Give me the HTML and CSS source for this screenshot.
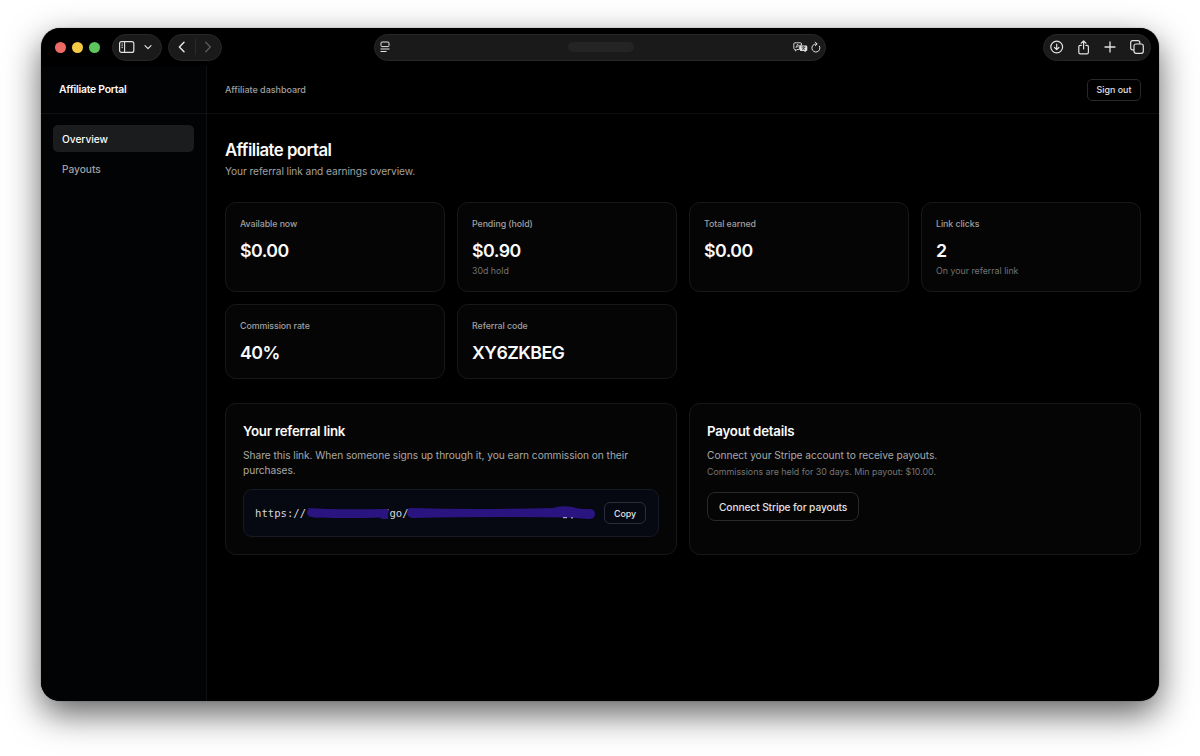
FILE: index.html
```html
<!DOCTYPE html>
<html lang="en">
<head>
  <meta charset="utf-8">
  <title>Affiliate portal</title>
  <link rel="stylesheet" href="styles.css">
</head>
<body>
  <div class="window">
    <div class="toolbar">
      <div class="lights">
        <span class="light red"></span>
        <span class="light yellow"></span>
        <span class="light green"></span>
      </div>
      <div class="pill sidebar-pill">
        <svg width="16" height="12" viewBox="0 0 16 12" fill="none" stroke="currentColor"><rect x=".6" y=".6" width="14.2" height="10.8" rx="2" stroke-width="1.2"/><path d="M5.6 .8v10.4" stroke-width="1.1"/><path d="M2.4 3h1.6M2.4 4.8h1.6M2.4 6.6h1.6" stroke-width=".8"/></svg>
        <svg width="8" height="6" viewBox="0 0 8 6" fill="none" stroke="currentColor" stroke-width="1.2" stroke-linecap="round" stroke-linejoin="round"><path d="M1 1.6l3 3 3-3"/></svg>
      </div>
      <div class="pill history-pill">
        <svg width="8" height="12" viewBox="0 0 8 12" fill="none" stroke="currentColor" stroke-width="1.5" stroke-linecap="round" stroke-linejoin="round"><path d="M6 1.2L1.4 6L6 10.8"/></svg>
        <span class="divider"></span>
        <svg class="dim" width="8" height="12" viewBox="0 0 8 12" fill="none" stroke="currentColor" stroke-width="1.3" stroke-linecap="round" stroke-linejoin="round"><path d="M1.7 1.2L6.3 6l-4.6 4.8"/></svg>
      </div>
      <div class="address">
        <svg width="10" height="12" viewBox="0 0 10 12" fill="none" stroke="currentColor"><rect x="1" y="1" width="8" height="4.6" rx="1"/><path d="M.5 8h9M.5 10.5h6"/></svg>
        <span class="address-text"></span>
        <span class="address-icons">
          <svg width="15" height="11" viewBox="0 0 15 11"><path d="M2 .8h5.4q1.2 0 1.2 1.2v1.2H7.4q-1 0-1 1v3.3H4L2.4 9V7.5H2Q.8 7.5 .8 6.3V2Q.8 .8 2 .8z" fill="none" stroke="currentColor" stroke-width=".9"/><path d="M2.8 5.9l1.8-3.7 1 2M3.4 4.8h2" fill="none" stroke="currentColor" stroke-width=".8"/><path d="M8 3.4h5q1.3 0 1.3 1.3v3q0 1.3-1.3 1.3h-.4v1.6L11 9H8Q6.8 9 6.8 7.7v-3Q6.8 3.4 8 3.4z" fill="currentColor"/><path d="M8.5 5.1h4M10.5 4.2v.9M9.1 7.9q2-1 2.5-2.7M9.4 5.7q.8 1.5 2.5 2.2" fill="none" stroke="#1b1b1b" stroke-width=".7"/></svg>
          <svg width="10" height="12" viewBox="0 0 10 12" fill="none" stroke="currentColor" stroke-linecap="round" stroke-linejoin="round"><path d="M8.5 5.2A4 4 0 1 1 5 3h.8M4.3 1.1l1.8 1.9-1.8 1.8"/></svg>
        </span>
      </div>
      <div class="pill actions-pill">
        <svg width="14" height="14" viewBox="0 0 14 14" fill="none" stroke="currentColor" stroke-width="1.2" stroke-linecap="round" stroke-linejoin="round"><circle cx="6.7" cy="7" r="5.9"/><path d="M6.7 4v5.5M4.5 7.5l2.2 2.2 2.2-2.2"/></svg>
        <svg width="13" height="15" viewBox="1 0 13 15" fill="none" stroke="currentColor" stroke-width="1.2" stroke-linecap="round" stroke-linejoin="round"><path d="M4.3 5.4H3.200Q1.800 5.400 1.800 6.800v5.400q0 1.600 1.600 1.600h6.400q1.600 0 1.600-1.600V6.800q0-1.400-1.400-1.400H8.900M6.600 9V1M4.200 3.200L6.600 .9 9 3.200"/></svg>
        <svg width="12" height="12" viewBox="0 0 12 12" fill="none" stroke="currentColor" stroke-width="1.3" stroke-linecap="round"><path d="M6 1v10M1 6h10"/></svg>
        <svg width="14" height="14" viewBox="0 0 14 14" fill="none" stroke="currentColor" stroke-width="1.2" stroke-linejoin="round"><rect x="4" y="4" width="9.3" height="9.3" rx="2"/><path d="M4 9.8H2.6Q.7 9.8 .7 7.9V2.6Q.7 .7 2.6 .7h5.3q1.9 0 1.9 1.9V4"/></svg>
      </div>
    </div>

    <div class="app">
      <aside class="sidebar">
        <div class="brand">Affiliate Portal</div>
        <nav class="nav">
          <a class="nav-item active">Overview</a>
          <a class="nav-item">Payouts</a>
        </nav>
      </aside>

      <div class="main">
        <header class="header">
          <span>Affiliate dashboard</span>
          <button class="button sign-out">Sign out</button>
        </header>

        <main class="content">
          <h1>Affiliate portal</h1>
          <p class="subtitle">Your referral link and earnings overview.</p>

          <div class="stats">
            <div class="card stat">
              <div class="label">Available now</div>
              <div class="value">$0.00</div>
            </div>
            <div class="card stat">
              <div class="label">Pending (hold)</div>
              <div class="value">$0.90</div>
              <div class="hint">30d hold</div>
            </div>
            <div class="card stat">
              <div class="label">Total earned</div>
              <div class="value">$0.00</div>
            </div>
            <div class="card stat">
              <div class="label">Link clicks</div>
              <div class="value">2</div>
              <div class="hint">On your referral link</div>
            </div>
            <div class="card stat">
              <div class="label">Commission rate</div>
              <div class="value">40%</div>
            </div>
            <div class="card stat">
              <div class="label">Referral code</div>
              <div class="value">XY6ZKBEG</div>
            </div>
          </div>

          <div class="panels">
            <section class="card panel">
              <h2>Your referral link</h2>
              <p>Share this link. When someone signs up through it, you earn commission on their purchases.</p>
              <div class="link-box">
                <div class="link">
                  <code>https://</code><code class="path">/go/</code>
                  <svg class="marker" width="342" height="20" viewBox="0 0 342 20"><path d="M52 5q28 2 80 1q3 1 1 5v5h-6l-2-1.500q-30 1-60 0q-12 1-13-4.500q0-3 2-4z"/><path d="M155 5q69 2 143 0q8-3 20-1q4 2 16 2q6 0 6 5q0 5-6 5l-14-1q-60-2-163 0q-5-1-5-6q0-3 3-4z"/><path class="trace" d="M308 14.700h4M316 14.900h2"/></svg>
                </div>
                <button class="button copy">Copy</button>
              </div>
            </section>
            <section class="card panel">
              <h2>Payout details</h2>
              <p>Connect your Stripe account to receive payouts.</p>
              <p class="note">Commissions are held for 30 days. Min payout: $10.00.</p>
              <button class="button connect">Connect Stripe for payouts</button>
            </section>
          </div>
        </main>
      </div>
    </div>
  </div>
</body>
</html>
```
FILE: styles.css
```css
* {
  box-sizing: border-box;
}

body {
  margin: 0;
  height: 756px;
  padding: 28px 41px 0;
  font-family: Inter, sans-serif;
  font-size: 10.2px;
  color: #fafafa;
  background: #ffffff;
  overflow: hidden;
}

h1,
h2,
p {
  margin: 0;
}

svg {
  display: block;
  flex-shrink: 0;
}

.window {
  display: flex;
  flex-direction: column;
  width: 1118px;
  height: 673px;
  border-radius: 19px;
  background: #000000;
  box-shadow: 0 0 1px rgba(0, 0, 0, 0.7), 0 13px 34px rgba(0, 0, 0, 0.62);
  overflow: hidden;
}

.toolbar {
  display: flex;
  align-items: center;
  height: 38px;
  padding: 0 8px 0 14px;
  color: #e2e2e2;
}

.lights {
  display: flex;
  gap: 6px;
  margin-right: 12px;
}

.light {
  width: 11px;
  height: 11px;
  border-radius: 50%;
}

.red {
  background: #ee6a66;
}

.yellow {
  background: #f5c944;
}

.green {
  background: #5fc65d;
}

.pill,
.address {
  display: flex;
  align-items: center;
  height: 27px;
  border: 1px solid #272727;
  border-radius: 14px;
  background: #1a1a1a;
}

.sidebar-pill {
  width: 50px;
  padding: 0 9px 0 6px;
  justify-content: space-between;
}

.history-pill {
  width: 54px;
  margin-left: 6px;
  padding: 0 9px;
  justify-content: space-between;
}

.divider {
  width: 1px;
  height: 16px;
  background: #2a2a2a;
}

.dim {
  color: #5c5c5c;
}

.address {
  width: 452px;
  margin-left: 152px;
  padding: 0 4px 0 5px;
}

.address-text {
  width: 66px;
  height: 10px;
  margin-left: 178px;
  border-radius: 5px;
  background: #242424;
}

.address-icons {
  display: flex;
  align-items: center;
  gap: 3px;
  margin-left: auto;
}

.actions-pill {
  width: 108px;
  margin-left: auto;
  padding: 0 6px;
  justify-content: space-between;
}

.app {
  display: flex;
  flex: 1;
}

.sidebar {
  width: 166px;
  border-right: 1px solid #0f1113;
  background: #020305;
}

.brand {
  height: 48px;
  padding-left: 18px;
  border-bottom: 1px solid #0f1113;
  font-size: 10.4px;
  font-weight: 600;
  line-height: 48px;
  letter-spacing: -0.24px;
}

.nav {
  display: flex;
  flex-direction: column;
  gap: 3px;
  padding: 11px 12px;
}

.nav-item {
  height: 27px;
  padding-left: 9px;
  border-radius: 5px;
  font-weight: 500;
  line-height: 28px;
  letter-spacing: -0.03px;
  color: #a0a0a2;
}

.nav-item.active {
  color: #fafafa;
  background: #1b1c1e;
}

.main {
  flex: 1;
}

.header {
  display: flex;
  align-items: center;
  justify-content: space-between;
  height: 48px;
  padding: 0 18px;
  border-bottom: 1px solid #0e0e0e;
  font-size: 9px;
  font-weight: 500;
  letter-spacing: -0.03px;
  color: #a0a0a0;
}

.button {
  height: 22px;
  padding: 0 8px;
  border: 1px solid #292929;
  border-radius: 5px;
  font-family: inherit;
  font-size: 8.9px;
  font-weight: 500;
  color: #e0e0e0;
  background: transparent;
}

.sign-out {
  width: 54px;
}

.content {
  padding: 25px 18px;
}

h1 {
  font-size: 16.8px;
  font-weight: 600;
  line-height: 22px;
  letter-spacing: -0.54px;
}

.subtitle {
  margin-top: 3px;
  line-height: 15px;
  letter-spacing: -0.09px;
  color: #a0a0a0;
}

.stats {
  display: grid;
  grid-template-columns: repeat(4, 1fr);
  gap: 12px;
  margin-top: 23px;
}

.card {
  border: 1px solid #181818;
  border-radius: 11px;
  background: #050505;
}

.stat {
  padding: 14px;
}

.stat:nth-child(n + 5) {
  height: 75px;
}

.stat:nth-child(-n + 4) {
  height: 90px;
}

.label {
  font-size: 8.8px;
  font-weight: 500;
  line-height: 13px;
  letter-spacing: -0.06px;
  color: #a0a0a0;
}

.value {
  margin-top: 8px;
  font-size: 17.8px;
  font-weight: 600;
  line-height: 25px;
  letter-spacing: -0.55px;
}

.hint {
  margin-top: 2px;
  font-size: 8.8px;
  line-height: 12px;
  color: #737373;
}

.panels {
  display: grid;
  grid-template-columns: 1fr 1fr;
  gap: 12px;
  margin-top: 24px;
}

.panel {
  height: 152px;
  padding: 18px 17px;
}

h2 {
  font-size: 13.3px;
  font-weight: 600;
  line-height: 19px;
  letter-spacing: -0.23px;
}

.panel p {
  margin-top: 7px;
  line-height: 15px;
  letter-spacing: -0.05px;
  color: #a8a8a8;
}

.panel .note {
  margin-top: 2px;
  font-size: 8.9px;
  line-height: 13px;
  letter-spacing: -0.02px;
  color: #757575;
}

.link-box {
  display: flex;
  align-items: center;
  justify-content: space-between;
  height: 48px;
  margin-top: 11px;
  padding: 0 12px 0 11px;
  border: 1px solid #171a24;
  border-radius: 9px;
  background: #060812;
}

.link {
  position: relative;
  display: flex;
  align-items: center;
  height: 20px;
}

.link code {
  font-family: "DejaVu Sans Mono", monospace;
  font-size: 10.6px;
  color: #d6d7dc;
}

.link .path {
  margin-left: 77px;
}

.marker {
  position: absolute;
  left: 0;
  top: 0;
  fill: #2a1580;
}

.marker .trace {
  stroke: #c9c9dc;
  stroke-width: 1;
}

.copy {
  padding: 0 9px;
  border-color: #2b2d37;
  border-radius: 6px;
  letter-spacing: -0.1px;
}

.connect {
  height: 29px;
  margin-top: 14px;
  padding: 0 11px;
  border-radius: 8px;
  font-size: 10.2px;
  letter-spacing: -0.1px;
}
```
